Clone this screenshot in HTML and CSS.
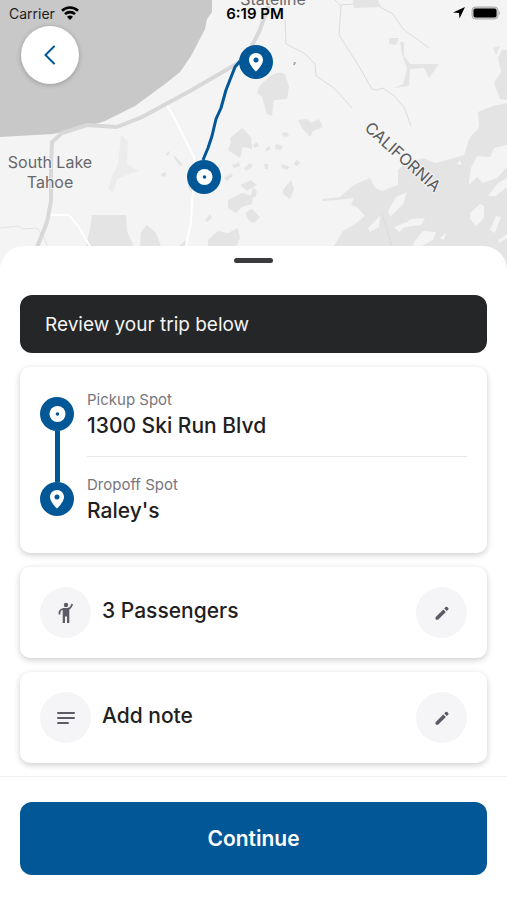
FILE: index.html
```html
<!DOCTYPE html>
<html lang="en">
<head>
<meta charset="utf-8">
<meta name="viewport" content="width=device-width, initial-scale=1">
<title>Review trip</title>
<link rel="stylesheet" href="styles.css">
</head>
<body>
<svg class="symbols" aria-hidden="true">
  <symbol id="pickup" viewBox="0 0 34 34">
    <circle cx="17" cy="17" r="17" fill="#025797"/>
    <circle cx="17.500" cy="17" r="8" fill="#fff"/>
    <circle cx="17.500" cy="17" r="1.800" fill="#025797"/>
  </symbol>
  <symbol id="dropoff" viewBox="0 0 34 34">
    <circle cx="17" cy="17" r="17" fill="#025797"/>
    <path fill="#fff" fill-rule="evenodd" d="M17 8c-4 0-7 3-7 7 0 5 7 11.500 7 11.500S24 20 24 15c0-4-3-7-7-7zm0 4.500a2.500 2.500 0 1 1 0 5 2.500 2.500 0 0 1 0-5z"/>
  </symbol>
  <symbol id="pencil" viewBox="0 0 16 16">
    <path fill="#5d5c66" d="M1.500 12.200 9.300 4.400l2.600 2.600-7.800 7.800H2.500a1 1 0 0 1-1-1zM10.200 3.500l1.400-1.400a1.200 1.200 0 0 1 1.700 0l.9.900a1.200 1.200 0 0 1 0 1.700l-1.400 1.400z"/>
  </symbol>
</svg>

<main class="app">
  <header class="map">
    <svg class="map-art" viewBox="0 0 507 270" preserveAspectRatio="xMidYMin slice" role="img" aria-label="Map of South Lake Tahoe with the trip route">
      <rect width="507" height="270" fill="#f4f4f4"/>
      <g fill="#e4e4e4">
        <path d="M92 215h34l1 16 8 18H85l5-20zM141 232l6-7 9 8 6 16h-22z"/>
        <path fill="#ececec" d="M121 135l7 6-1 23 12 7-10 3-12 5-4 14-5-4 5-15 5-10z"/>
        <path d="M259 87c7-8 17-18 26-13l4 13-2 12-13 1-2 16-5-2-5-17-5-4z"/>
        <path d="M298 120l9-1 4 4 8-4 4 8-10 4-3 6-8-9zM230 138l12-10 9 9 1 12-9-2-3 11-12-8 3-8z"/>
        <path d="M353 0h25l3 7-27 1zM389 38l10 0-3 7-7-1zM400 42l4 0 0 14 6 8 29 0-10 14-5-10-14 1-1 17-15 2 9-4 4-15-5-15z"/>
        <path d="M493 48l7-2-4 9zM502 50l5 0v50l-7-1-6-16 7-11-3-14z"/>
        <path d="M322 199l18-2 14-12 16-7 5 10 7 3 16-6v-15l8-8 9-1 8-3 12 5 19-5 10-3 6-18 8-8 1-4-1-13 15-6 14-3V270H334V246l9-15 12-7 10-8-8-9-6-2 3-7-16 2-16 1z"/>
        <path d="M228 200l14-7 11 3-1 8-10 3-6 6-8-5zM240 185l11-5 6 5-10 6zM207 222l5-4-2-4-5 6zM208 240l10-9 10 2 10-5 2 10-5 11h-27zM283 190l8-10 3 9-4 10-7-5zM224 178l7-5 2 3-6 5zM232 165l7-3 1 4-6 2zM244 168l6-5 3 3-7 5zM253 145l4-3 2 4-4 2zM265 149l4-3 2 3-4 2zM282 133l5-1 2 4-5 1zM276 144l7 2-2 4-6-1zM281 164l9 3-3 3-5-2zM264 164l4 0 0 5-3 0zM296 160l4 2-2 4-4-1zM253 187l4 4-2 7-4-3zM180 245l6-5 1 9h-7zM188 177l5 6 0 12-5-8zM174 155l9 10-3 1-6-8zM161 174l5-2 0 4-4 1zM166 154l3-3 1 2-3 3zM245 213l7-4 8 8-6 6-5-2z"/>
      </g>
      <g fill="#f4f4f4">
        <path d="M388 211l8-14 11-5-4 12-13 13zM368 228l12-12-1 11-9 5zM394 227l13-5 4-3 14-1-4 7-16 2-6 5zM414 242l9-11 13 1-3 8-11 6h-9zM469 180l2-12 6-12 13 1 4-9 13-3v22l-10 11-14 5-6-6-8 8zM470 213l10-9 4 2 0 12-8 8-6-7zM488 196l10-13 9-5v9l-11 9zM490 230l6-14 5 1-6 16zM457 164l3-4 2 5zM440 238l6-5-2 7zM498 240l9-6v4l-8 5z"/>
      </g>
      <path d="M0 0H212l0 12-5 7-2 10-14 27-11 16-15 12-30 22-30 15-16 5-36 8-53 3z" fill="#c8c8c8"/>
      <g fill="none" stroke="#dcdcdc" stroke-width="1">
        <path d="M285 20l1 24 18 9 11 11 1 12 18 12 18 20M335 0l6 6-2 29 18 28 15 26 5 1 6-2 10 7 11 12 7 19M341 5l12-1M380 7l13 7 10 15 26 19M382 213l10 34"/>
        <path stroke="#e3e3e3" d="M0 228l18-2 5 3 14-1 7 10 4 9"/>
      </g>
      <path d="M50 215l19 0 9 11 13 22M167 105l9 16 18 36 0 26-2 18-1 22-4 18-3 16" fill="none" stroke="#fff" stroke-width="2"/>
      <path d="M271 0l-12 32-14 27-55 32-48 26-25 10-30-2-25 8-10 9-1 22 0 37-4 21-17 43" fill="none" stroke="#d8d8d8" stroke-width="4" stroke-linejoin="round"/>
      <path d="M294 62l2 0-1 3-2 0z" fill="#aaa"/>
      <g class="map-label">
        <text x="273" y="5">Stateline</text>
        <text x="50" y="168">South Lake</text>
        <text x="50" y="188">Tahoe</text>
        <text class="map-state" transform="translate(399 161) rotate(42)">CALIFORNIA</text>
      </g>
      <path d="M203 160l5-12 4-12 4-17 5-11 5-18 9-23 5-6" fill="none" stroke="#025797" stroke-width="3" stroke-linejoin="round"/>
      <use href="#dropoff" x="239" y="45" width="34" height="34"/>
      <use href="#pickup" x="187" y="160" width="34" height="34"/>
    </svg>

    <div class="status">
      <div class="status-side">
        <span>Carrier</span>
        <svg width="18" height="14" viewBox="0 0 18 14" fill="none" stroke="#000" stroke-width="2.600" aria-label="Wi-Fi">
          <path d="M1 4.800a11.500 11.500 0 0 1 16 0M4 8.200a7 7 0 0 1 10 0"/>
          <path fill="#000" stroke="none" d="M9 14 6 10.800a4.500 4.500 0 0 1 6 0z"/>
        </svg>
      </div>
      <time class="status-time">6:19 PM</time>
      <div class="status-side status-end">
        <svg width="12" height="12" viewBox="0 0 12 12" aria-label="Location"><path d="M12 0 6.500 11.500 6 6 0 5.500z"/></svg>
        <svg width="30" height="14" viewBox="0 0 30 14" aria-label="Battery">
          <rect x="1" y="1" width="26" height="12" rx="3.500" fill="#ccc" stroke="#aaa"/>
          <rect x="2.500" y="2.500" width="23" height="9" rx="2"/>
          <path d="M28 5q2 2 0 4z" fill="#aaa"/>
        </svg>
      </div>
    </div>

    <button class="back" type="button" aria-label="Back">
      <svg width="12" height="20" viewBox="0 0 12 20" fill="none" stroke="#025797" stroke-width="2" stroke-linecap="round"><path d="M10 1.500 1.500 10l8.500 8.500"/></svg>
    </button>
  </header>

  <section class="sheet">
    <div class="handle"></div>
    <div class="content">
      <h1 class="banner">Review your trip below</h1>

      <div class="card trip">
        <div class="trip-rail">
          <svg class="pin"><use href="#pickup"/></svg>
          <span class="trip-line"></span>
          <svg class="pin"><use href="#dropoff"/></svg>
        </div>
        <dl class="stops">
          <div class="stop">
            <dt>Pickup Spot</dt>
            <dd>1300 Ski Run Blvd</dd>
          </div>
          <div class="stop">
            <dt>Dropoff Spot</dt>
            <dd>Raley's</dd>
          </div>
        </dl>
      </div>

      <div class="card option">
        <span class="disc">
          <svg width="16" height="22" viewBox="0 0 16 22" aria-hidden="true">
            <circle cx="8" cy="3" r="2.200" fill="#5d5c66"/>
            <path d="M1.500 12.500v-2q0-2.600 3.500-3.500h5q3-.7 4.200-5" fill="none" stroke="#5d5c66" stroke-width="1.800"/>
            <path d="M4.700 6.200h6.600V21H9v-6.500H7V21H4.700z" fill="#5d5c66"/>
          </svg>
        </span>
        <span class="option-name">3 Passengers</span>
        <button class="disc" type="button" aria-label="Edit passengers"><svg width="16" height="16"><use href="#pencil"/></svg></button>
      </div>

      <div class="card option">
        <span class="disc">
          <svg width="18" height="14" viewBox="0 0 18 14" fill="none" stroke="#5d5c66" stroke-width="2" stroke-linecap="round" aria-hidden="true"><path d="M1 2h16M1 7h16M1 12h10"/></svg>
        </span>
        <span class="option-name">Add note</span>
        <button class="disc" type="button" aria-label="Edit note"><svg width="16" height="16"><use href="#pencil"/></svg></button>
      </div>
    </div>

    <footer class="footer">
      <button class="continue" type="button">Continue</button>
    </footer>
  </section>
</main>
</body>
</html>
```
FILE: styles.css
```css
* {
  box-sizing: border-box;
}

body {
  margin: 0;
  background: #fff;
  color: #1f2022;
  font-family: Inter, "Liberation Sans", sans-serif;
}

button {
  border: 0;
  padding: 0;
  font: inherit;
  cursor: pointer;
}

.symbols {
  position: absolute;
  width: 0;
  height: 0;
}

.app {
  display: flex;
  flex-direction: column;
  min-height: 100vh;
}

/* Map */
.map {
  position: relative;
  height: 270px;
  background: #f4f4f4;
}

.map-art {
  position: absolute;
  inset: 0;
  width: 100%;
  height: 100%;
}

.map-label {
  fill: #68686a;
  font-size: 16px;
  text-anchor: middle;
  paint-order: stroke;
  stroke: #f4f4f4;
  stroke-width: 2px;
}

.map-state {
  fill: #58585a;
}

.status {
  position: relative;
  display: grid;
  grid-template-columns: 1fr auto 1fr;
  align-items: center;
  height: 26px;
  padding: 0 6px 0 9px;
  font-size: 14px;
}

.status-side {
  display: flex;
  align-items: center;
  gap: 6px;
}

.status-end {
  justify-content: flex-end;
}

.status-time {
  color: #000;
  font-size: 15px;
  font-weight: 600;
}

.back {
  position: relative;
  display: grid;
  place-items: center;
  width: 58px;
  height: 58px;
  margin-left: 21px;
  border-radius: 50%;
  background: #fff;
  box-shadow: 0 1px 5px rgba(0, 0, 0, 0.25);
}

/* Bottom sheet */
.sheet {
  position: relative;
  display: flex;
  flex: 1;
  flex-direction: column;
  margin-top: -24px;
  border-radius: 24px 24px 0 0;
  background: #fff;
}

.handle {
  width: 39px;
  height: 5px;
  margin: 12px auto 0;
  border-radius: 3px;
  background: #3b3b3d;
}

.content {
  display: flex;
  flex: 1;
  flex-direction: column;
  gap: 14px;
  padding: 32px 20px 12px;
}

.banner {
  margin: 0;
  padding: 17px 25px 15px;
  border-radius: 12px;
  background: #242628;
  color: #f4f4f4;
  font-size: 19px;
  font-weight: 400;
  line-height: 26px;
}

.card {
  border-radius: 10px;
  background: #fff;
  box-shadow: 0 2px 6px rgba(0, 0, 0, 0.2);
}

.trip {
  display: flex;
  gap: 13px;
  padding: 21px 20px 28px;
}

.trip-rail {
  display: flex;
  flex-direction: column;
  align-items: center;
  padding: 9px 0;
}

.pin {
  display: block;
  width: 34px;
  height: 34px;
}

.trip-line {
  flex: 1;
  width: 5px;
  background: #025797;
}

.stops {
  flex: 1;
  margin: 0;
}

.stop + .stop {
  margin-top: 16px;
  padding-top: 16px;
  border-top: 1px solid #e9e9eb;
}

.stop dt {
  color: #77767e;
  font-size: 15px;
  line-height: 24px;
}

.stop dd {
  margin: 0;
  font-size: 21px;
  font-weight: 500;
  line-height: 28px;
}

.option {
  display: flex;
  align-items: center;
  gap: 11px;
  padding: 20px;
}

.option-name {
  flex: 1;
  padding-bottom: 4px;
  font-size: 21px;
  font-weight: 500;
}

.disc {
  display: grid;
  place-items: center;
  width: 51px;
  height: 51px;
  border-radius: 50%;
  background: #f5f5f7;
}

.footer {
  padding: 25px 20px;
  border-top: 1px solid #f2f2f3;
}

.continue {
  width: 100%;
  height: 73px;
  border-radius: 12px;
  background: #025797;
  color: #fff;
  font-size: 21px;
  font-weight: 600;
}
```
